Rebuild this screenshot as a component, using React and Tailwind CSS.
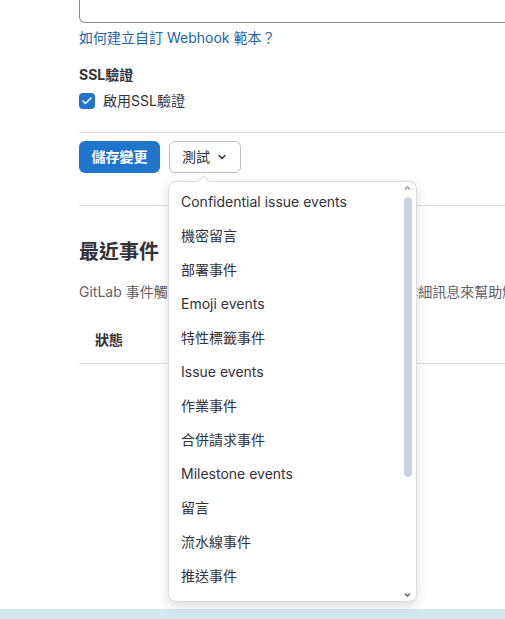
import { Check, ChevronDown } from 'lucide-react'

const events = [
  'Confidential issue events',
  '機密留言',
  '部署事件',
  'Emoji events',
  '特性標籤事件',
  'Issue events',
  '作業事件',
  '合併請求事件',
  'Milestone events',
  '留言',
  '流水線事件',
  '推送事件',
]

function TestDropdown() {
  return (
    <div className="relative">
      <button className="h-8 px-3 flex items-center gap-1.5 rounded-md border border-[#bfbfc3] bg-white text-sm text-[#333238]">
        測試
        <ChevronDown size={12} strokeWidth={3} className="text-[#333238]" />
      </button>

      {/* listbox popover */}
      <div className="absolute z-10 left-[-1px] top-[40px] w-[249px] h-[421px] bg-white border border-[#dcdcde] rounded-lg shadow-[0_4px_12px_rgba(5,5,6,0.14)]">
        <div className="absolute -top-[5px] left-[30px] w-[9px] h-[9px] rotate-45 bg-white border-l border-t border-[#dcdcde]" />
        <div className="h-full overflow-hidden rounded-lg pt-[3px]">
          {events.map(e => (
            <div key={e} className="h-[34px] flex items-center px-[12px] text-sm text-[#333238] whitespace-nowrap">
              {e}
            </div>
          ))}
        </div>
        {/* scrollbar */}
        <svg className="absolute right-[5px] top-[3px]" width="7" height="6" viewBox="0 0 7 6">
          <path d="M1 4.5 L3.5 2 L6 4.5" fill="none" stroke="#9a9a9e" strokeWidth="1.3" />
        </svg>
        <div className="absolute right-[4px] top-[15px] w-[8px] h-[280px] rounded-full bg-[#cad5df]" />
        <svg className="absolute right-[5px] bottom-[3px]" width="7" height="6" viewBox="0 0 7 6">
          <path d="M1 1.5 L3.5 4 L6 1.5" fill="none" stroke="#6e6e73" strokeWidth="1.6" />
        </svg>
      </div>
    </div>
  )
}

export default function App() {
  return (
    <div className="h-[619px] w-[505px] overflow-hidden flex flex-col bg-white text-[#333238] font-['Inter','Noto_Sans_CJK_TC',sans-serif]">
      <main className="flex-1 pl-[79px]">
        <div className="w-[600px]">
          {/* template textarea (scrolled) */}
          <div className="h-[23px] border-x border-b border-[#89888d] rounded-b-md" />

          <a className="block mt-[5px] text-sm leading-5 text-[#2262aa]">如何建立自訂 Webhook 範本？</a>

          <h3 className="mt-[17px] text-sm leading-5 font-bold">SSL驗證</h3>
          <label className="mt-[6px] flex items-center gap-2 text-sm leading-5">
            <span className="w-4 h-4 rounded-[4px] bg-[#1f75cb] flex items-center justify-center">
              <Check size={12} strokeWidth={3} className="text-white" />
            </span>
            啟用SSL驗證
          </label>

          <div className="mt-[21px] border-t border-[#dcdcde]" />

          <div className="mt-2 flex items-center gap-[9px]">
            <button className="h-8 px-3 w-[81px] rounded-md bg-[#1f75cb] text-white text-sm font-semibold">儲存變更</button>
            <TestDropdown />
          </div>

          <div className="mt-8 border-t border-[#dcdcde]" />

          <h2 className="mt-8 text-[20px] leading-7 font-bold">最近事件</h2>
          <p className="mt-4 text-sm leading-5 text-[#626168] whitespace-nowrap">
            GitLab 事件觸發 webhook 的最近請求。使用請求的詳細訊息來幫助解決問題。
          </p>

          <div className="mt-[14px] h-[48px] flex items-center px-4 border-b border-[#dcdcde] text-sm font-bold">
            狀態
          </div>
        </div>
      </main>
      <div className="h-[10px] bg-[#d3e9f1]" />
    </div>
  )
}
